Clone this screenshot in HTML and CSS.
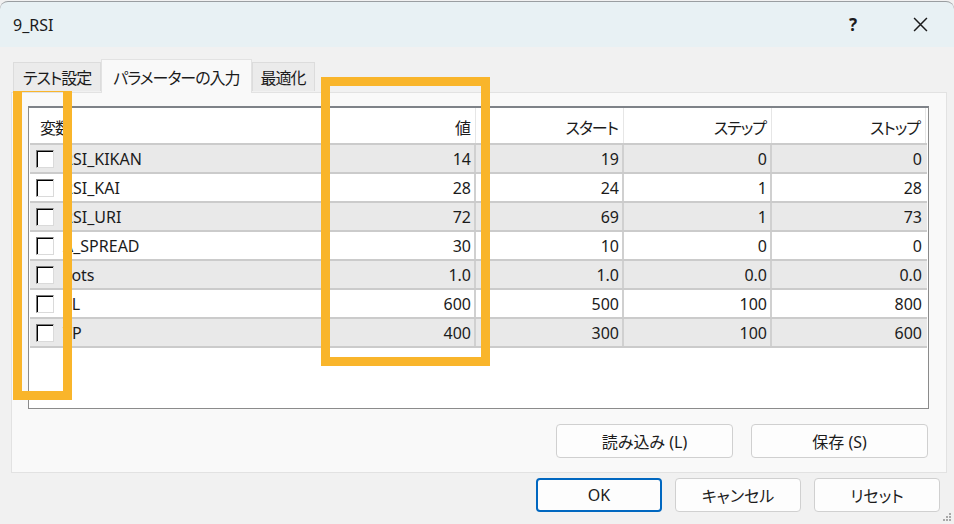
FILE: index.html
```html
<!DOCTYPE html>
<html>
<head>
    <title>9_RSI</title>
    <meta charset="UTF-8">
    <link rel="stylesheet" href="styles.css">
</head>
<body>
    <div class="dialog">
        <div class="titlebar">
            <span class="title">9_RSI</span>
            <div class="title-buttons">
                <span class="help">?</span>
                <span class="close">
                    <svg viewBox="0 0 14 14">
                        <path d="M1 1L13 13M13 1L1 13"/>
                    </svg>
                </span>
            </div>
        </div>

        <div class="tabs">
            <div class="tab">テスト設定</div>
            <div class="tab active">パラメーターの入力</div>
            <div class="tab">最適化</div>
        </div>

        <div class="panel">
            <div class="list">
                <div class="row head">
                    <div class="cell name">変数</div>
                    <div class="cell">値</div>
                    <div class="cell">スタート</div>
                    <div class="cell">ステップ</div>
                    <div class="cell">ストップ</div>
                </div>
                <div class="row odd">
                    <div class="cell name"><span class="check"></span>RSI_KIKAN</div>
                    <div class="cell">14</div><div class="cell">19</div><div class="cell">0</div><div class="cell">0</div>
                </div>
                <div class="row">
                    <div class="cell name"><span class="check"></span>RSI_KAI</div>
                    <div class="cell">28</div><div class="cell">24</div><div class="cell">1</div><div class="cell">28</div>
                </div>
                <div class="row odd">
                    <div class="cell name"><span class="check"></span>RSI_URI</div>
                    <div class="cell">72</div><div class="cell">69</div><div class="cell">1</div><div class="cell">73</div>
                </div>
                <div class="row">
                    <div class="cell name"><span class="check"></span>A_SPREAD</div>
                    <div class="cell">30</div><div class="cell">10</div><div class="cell">0</div><div class="cell">0</div>
                </div>
                <div class="row odd">
                    <div class="cell name"><span class="check"></span>Lots</div>
                    <div class="cell">1.0</div><div class="cell">1.0</div><div class="cell">0.0</div><div class="cell">0.0</div>
                </div>
                <div class="row">
                    <div class="cell name"><span class="check"></span>SL</div>
                    <div class="cell">600</div><div class="cell">500</div><div class="cell">100</div><div class="cell">800</div>
                </div>
                <div class="row odd">
                    <div class="cell name"><span class="check"></span>TP</div>
                    <div class="cell">400</div><div class="cell">300</div><div class="cell">100</div><div class="cell">600</div>
                </div>
            </div>
            <div class="panel-buttons">
                <button class="btn wide">読み込み (L)</button>
                <button class="btn wide">保存 (S)</button>
            </div>
        </div>

        <div class="footer">
            <button class="btn default">OK</button>
            <button class="btn">キャンセル</button>
            <button class="btn">リセット</button>
        </div>

        <svg class="grip" viewBox="0 0 9 9">
            <rect x="6" y="0" width="2" height="2"/>
            <rect x="3" y="3" width="2" height="2"/>
            <rect x="6" y="3" width="2" height="2"/>
            <rect x="0" y="6" width="2" height="2"/>
            <rect x="3" y="6" width="2" height="2"/>
            <rect x="6" y="6" width="2" height="2"/>
        </svg>

        <!-- highlight marks drawn over the screenshot -->
        <div class="mark mark-vars"></div>
        <div class="mark mark-value"></div>
    </div>
</body>
</html>
```

FILE: styles.css
```css
* {
    box-sizing: border-box;
}
body {
    margin: 0;
    background: #f0f0f0;
    font-family: "Noto Sans", "Noto Sans CJK JP", sans-serif;
    font-size: 16px;
    color: #1b1b1b;
    font-feature-settings: "palt";
}
.dialog {
    position: relative;
    width: 954px;
    height: 524px;
    overflow: hidden;
    background: #f1f1f1;
}
.titlebar {
    height: 46px;
    margin-top: 1px;
    border-top: 1px solid #9a9ea1;
    border-radius: 8px 8px 0 0;
    background: #e8f1f4;
    display: flex;
    align-items: center;
    justify-content: space-between;
    padding: 0 26px 0 13px;
}
.title {
    font-size: 16px;
}
.title-buttons {
    display: flex;
    align-items: center;
    gap: 56px;
}
.help {
    font-weight: bold;
    font-size: 17px;
}
.close {
    display: flex;
}
.close svg {
    width: 15px;
    height: 15px;
    stroke: #1b1b1b;
    stroke-width: 1.4;
    fill: none;
}
.tabs {
    display: flex;
    align-items: flex-end;
    height: 45px;
    padding-left: 13px;
    position: relative;
    z-index: 1;
}
.tab {
    height: 29px;
    padding: 0 9px;
    border: 1px solid #dcdcdc;
    border-bottom: none;
    background: #ebebeb;
    display: flex;
    align-items: center;
    margin-bottom: 1px;
    letter-spacing: -1px;
}
.tab:last-child {
    padding: 0 8px;
}
.tab.active {
    height: 34px;
    margin-bottom: -1px;
    padding: 0 11px;
    background: #f9f9f9;
    border-color: #e2e2e2;
}
.panel {
    margin-left: 11px;
    width: 936px;
    height: 381px;
    background: #f9f9f9;
    border: 1px solid #e2e2e2;
    padding: 13px 17px 0 16px;
}
.list {
    height: 303px;
    background: #fff;
    border: 1px solid #8b8b8b;
    border-top: 2px solid #7e8288;
    padding: 0 1px 0 1px;
}
.row {
    display: grid;
    grid-template-columns: 296px 150px 148px 148px 1fr;
    height: 29px;
    border-bottom: 2px solid #cbcbcb;
}
.row.odd {
    background: #e9e9e9;
}
.row.head {
    height: 37px;
    background: #fff;
    letter-spacing: -1px;
}
.row.head .cell {
    padding-top: 2px;
    padding-right: 5px;
}
.cell {
    display: flex;
    align-items: center;
    justify-content: flex-end;
    padding-right: 3px;
    border-right: 2px solid #d0d0d0;
    white-space: nowrap;
}
.cell:last-child {
    border-right: none;
    padding-right: 5px;
}
.head .cell {
    border-right: 1px solid #e6e6e6;
}
.head .cell:last-child {
    border-right: 1px solid #e6e6e6;
    margin-right: 1px;
}
.cell.name {
    justify-content: flex-start;
    padding-left: 6px;
}
.head .cell.name {
    padding-left: 10px;
}
.check {
    width: 18px;
    height: 18px;
    margin-right: 9px;
    background: #fff;
    border: 1px solid #dadada;
    border-top-color: #7a7a7a;
    border-left-color: #7a7a7a;
    box-shadow: inset 1px 1px 0 #000;
}
.panel-buttons {
    display: flex;
    justify-content: flex-end;
    gap: 18px;
    margin-top: 15px;
    padding-right: 1px;
}
.btn {
    height: 34px;
    background: #fdfdfd;
    border: 1px solid #d0d0d0;
    border-radius: 4px;
    font-family: "Noto Sans", "Noto Sans CJK JP", sans-serif;
    font-size: 16px;
    color: #1b1b1b;
    font-feature-settings: "palt";
    width: 126px;
    padding: 0;
}
.btn.wide {
    width: 177px;
}
.btn.default {
    border: 2px solid #0067c0;
}
.footer {
    display: flex;
    justify-content: flex-end;
    gap: 13px;
    margin-top: 5px;
    padding-right: 14px;
}
.grip {
    position: absolute;
    right: 2px;
    bottom: 2px;
    width: 9px;
    height: 9px;
    fill: #a8a8a8;
}
.mark {
    position: absolute;
    border: 9px solid #f9b52b;
}
.mark-vars {
    left: 13px;
    top: 83px;
    width: 59px;
    height: 317px;
}
.mark-value {
    left: 321px;
    top: 77px;
    width: 169px;
    height: 289px;
}
```
